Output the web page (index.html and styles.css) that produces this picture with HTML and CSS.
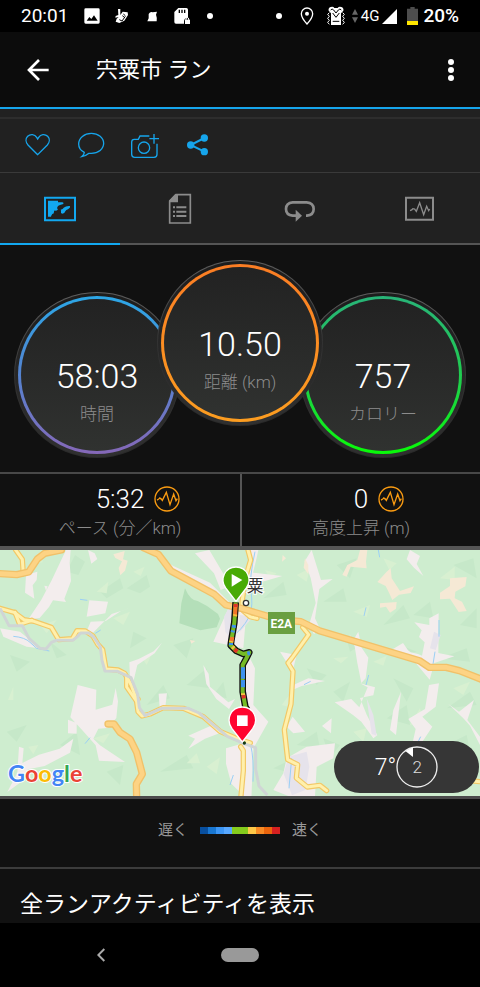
FILE: index.html
```html
<!DOCTYPE html>
<html lang="ja">
<head>
<meta charset="utf-8">
<meta name="viewport" content="width=device-width, initial-scale=1">
<title>宍粟市 ラン</title>
<link rel="stylesheet" href="styles.css">
</head>
<body>
<div class="status">
  <div class="status-left">
    <time class="clock">20:01</time>
    <svg class="si" viewBox="0 0 48 48"><path fill="#fff" fill-rule="evenodd" d="M5 1h38q4 0 4 4v38q0 4-4 4H5q-4 0-4-4V5q0-4 4-4zM8 38h33L30 22l-8 11-6-6z"/></svg>
    <svg class="si" viewBox="0 0 48 48"><path fill="#fff" d="M12 3h7v18l7-10 15 2 1 8-11 17-15 7-11-4 3-9 6-5-10 2 1-5 8-3z"/><path fill="none" stroke="#000" stroke-width="3" d="M28 18l6 5M25 23l6 5M16 35l8 4 10-14"/></svg>
    <svg class="si" viewBox="0 0 48 48"><path fill="#fff" d="M14 18q5-8 12-5l13-2-3 9q4 10 2 20H10l4-9z"/></svg>
    <svg class="si" viewBox="0 0 48 48"><path fill="#fff" d="M13 0h24q5 0 5 5v24q-12 0-12 12v6H6q-5 0-5-5V12z"/><path stroke="#000" stroke-width="4" d="M16 5v10M24 5v10M32 5v10"/><path fill="#fff" d="M33 35h15v13H33z"/><path fill="none" stroke="#fff" stroke-width="3" d="M36 36v-3q0-4 4-4t4 4v3"/></svg>
    <i class="dot"></i>
  </div>
  <div class="status-right">
    <i class="dot"></i>
    <svg class="pin-icon" viewBox="0 0 42 54"><path fill="none" stroke="#fff" stroke-width="4" d="M21 51Q4 32 4 20a17 17 0 0 1 34 0q0 12-17 31z"/><circle cx="21" cy="20" r="6" fill="#fff"/></svg>
    <svg class="buzz-icon" viewBox="0 0 60 60"><path fill="#fff" d="M15 22L8 14q-2-8 6-11 8-3 11 3h10q4-6 11-3 8 3 6 11l-7 8v35H15z"/><g fill="none" stroke="#000" stroke-width="3"><path d="M14 12q4-6 9 0l7 9 7-9q5-6 9 0M20 21l10 13 10-13"/><path d="M20 46h20"/></g><path fill="none" stroke="#fff" stroke-width="3" d="M10 20l-5 5 5 6-5 6 5 6-5 6 5 6M50 20l5 5-5 6 5 6-5 6 5 6-5 6"/></svg>
    <svg class="data-icon" viewBox="0 0 18 42"><path fill="#666" d="M9 0l9 17H0zM9 42L0 25h18z"/></svg>
    <span class="net">4G</span>
    <svg class="signal-icon" viewBox="0 0 45 45"><path fill="#fff" d="M45 0v45H0z"/></svg>
    <svg class="battery-icon" viewBox="0 0 33 54"><path fill="#4d4d4d" d="M10 0h13v5h10v37H0V5h10z"/><path fill="#ffe600" d="M0 42h33v12H0z"/></svg>
    <span class="percent">20%</span>
  </div>
</div>

<header class="appbar">
  <button class="icon-button" type="button" aria-label="戻る"><svg class="back-icon" viewBox="0 0 66 66"><path fill="none" stroke="#fff" stroke-width="8" d="M65 33H6M36 3L6 33l30 30"/></svg></button>
  <h1>宍粟市 ラン</h1>
  <button class="icon-button" type="button" aria-label="メニュー"><svg class="more-icon" viewBox="0 0 8 24"><g fill="#fff"><circle cx="4" cy="4" r="3"/><circle cx="4" cy="12" r="3"/><circle cx="4" cy="20" r="3"/></g></svg></button>
</header>

<div class="actions">
  <button type="button" aria-label="いいね"><svg viewBox="68 77 90 90"><path d="M112 151L83 122C76 114 75 103 82 96c8-8 21-7 27 3l3 5 3-5c6-10 19-11 27-3 7 7 6 18-1 26z"/></svg></button>
  <button type="button" aria-label="コメント"><svg viewBox="227 76 90 90"><path d="M252 143c-11-5-17-14-17-25 0-18 17-32 38-32s37 13 37 30-16 30-37 30h-7c-6 5-14 9-22 10 5-4 8-8 8-13z"/></svg></button>
  <button type="button" aria-label="写真を追加"><svg viewBox="386 76 90 90"><path d="M447 94h-28l-5 10h-12q-8 0-8 8v37q0 9 9 9h58q9 0 9-9v-32M461 88v29M447 102h29"/><circle cx="431" cy="129" r="17"/></svg></button>
  <button type="button" aria-label="共有"><svg viewBox="545 76 90 90"><path stroke-width="6" d="M612 100l-41 21 41 20"/><g fill="#16a5ec" stroke="none"><circle cx="612" cy="100" r="11"/><circle cx="571" cy="121" r="11"/><circle cx="612" cy="141" r="11"/></g></svg></button>
</div>

<nav class="tabs">
  <button class="active" type="button" aria-label="マップ"><svg viewBox="126 256 108 108"><path fill="none" stroke="currentColor" stroke-width="6" d="M135 279h90v68h-90z"/><path fill="currentColor" d="M144 288h30v5h13q5 1 3 5l-10 3q-6 2-8 6-2 5 2 7-3 5-7 4-6-1-5 4 0 6-5 6-3 3-4 8h-9zM210 304q2 6-6 10-6 1-8 6-2 7-9 7-6-1-4-6 1-3-1-6 7-1 9-6 7-6 19-5z"/></svg></button>
  <button type="button" aria-label="詳細"><svg viewBox="486 256 108 108"><path fill="none" stroke="currentColor" stroke-width="5" d="M528 270h43v85h-62v-66z"/><path fill="currentColor" d="M526 268h8v25h-26v-6z"/><path stroke="currentColor" stroke-width="6" d="M519 308h6m4 0h30M519 321h6m4 0h30M519 334h6m4 0h30"/></svg></button>
  <button type="button" aria-label="ラップ"><svg viewBox="126 256 108 108"><path fill="none" stroke="currentColor" stroke-width="8" d="M168 333h-10q-20-2-20-20t20-20h42q21 2 21 20t-20 20h-3"/><path fill="currentColor" d="M167 315l19 18-19 18z"/></svg></button>
  <button type="button" aria-label="グラフ"><svg viewBox="486 256 108 108"><path fill="none" stroke="currentColor" stroke-width="6" d="M498 279h81v66h-81z"/><path fill="none" stroke="currentColor" stroke-width="4" d="M510 318q6-1 9-6l5 1 5 7 10-26 12 36 9-25 6 13 3-5"/></svg></button>
</nav>

<main>
<section class="gauges">
  <div class="gauge time"><div class="ring"><strong>58:03</strong><span>時間</span></div></div>
  <div class="gauge distance"><div class="ring"><strong>10.50</strong><span>距離 (km)</span></div></div>
  <div class="gauge calories"><div class="ring"><strong>757</strong><span>カロリー</span></div></div>
</section>

<section class="stats">
  <div class="stat">
    <strong>5:32</strong>
    <svg viewBox="0 0 78 78"><circle cx="39" cy="39" r="36"/><path d="M9 42q6-2 8-6 4 1 8 7l12-24 11 37 11-32 7 20 4-6"/></svg>
    <span>ペース (分／km)</span>
  </div>
  <div class="stat">
    <strong>0</strong>
    <svg viewBox="0 0 78 78"><circle cx="39" cy="39" r="36"/><path d="M9 42q6-2 8-6 4 1 8 7l12-24 11 37 11-32 7 20 4-6"/></svg>
    <span>高度上昇 (m)</span>
  </div>
</section>

<section class="map">
  <svg class="map-art" viewBox="0 15 1440 738" role="img" aria-label="ルートマップ">
    <path fill="#ceedcf" d="M0 0h1440v768H0z"/>
    <!-- hill shading -->
    <g fill="#c6e8c9">
      <path d="M200 80l25-50 30 20-20 40zM300 140l60-40 10 30-50 30zM380 130l60-40 10 35-30 20zM30 330l60 20-40 30zM150 290l50 40-30 10zM20 560l60-20-30 50zM180 600l50-40 10 70zM400 260l40 20-50 30zM520 300l60-20-20 60zM440 480l50-60 20 40zM560 420l60-50 10 60zM480 680l80-50 20 40zM320 680l50-20-10 60zM640 450l30-40 10 50zM790 160l60-50 10 40zM970 170l60-40 10 40zM1010 60l60-20-20 60zM1150 240l60-60 20 40zM1240 210l50-40 10 50zM1040 280l60 10-50 30zM1200 300l50 20-60 10zM1360 60l60-20 10 60zM1380 240l50-50v60zM1320 340l80-30 10 40zM920 370l60 20-30 30zM1000 440l50-30-20 60zM890 600l60-40 10 50zM970 580l50 20-30 40zM1160 520l60-40 10 60zM1340 490l70-50 20 40zM1340 600l60-30 10 50zM820 670l60-30 20 50zM1180 400l60 30-20 40z"/>
      <path fill="#b4dfb9" d="M555 130q16 38 38 38l28 15 33 24 6 14-10 26-49 9-63-21 6-60z"/>
    </g>
    <g fill="#d8f0d1">
      <path d="M88 60l35-42 5 34zM120 240l50-15-30 40zM290 140l35-30-5 35zM340 220l50-20-20 40zM24 465l16-40v40zM430 345l24-15-14 30zM85 605l30-5-15 28zM560 655l30-30 10 30zM620 665l40-28-10 50zM280 580l50-15-20 30zM400 80l34-15-12 28zM795 75l35 10-20 14zM890 90l40-20-10 40zM1060 200l50-20-10 36zM1320 100l44-35v40zM1150 40l40 15-22 20zM1000 340l45-5-22 20zM1120 350l40-18-10 30zM1230 540l30-50 10 40zM1360 430l50-20-20 40zM915 660l60-35-20 40zM845 480l30-40 5 50zM1060 560l40-10-10 40z"/>
    </g>
    <!-- settlements -->
    <g fill="#f3eded">
      <path d="M198 15h14l-3 38 4 55-20 53 5 10-39-5-12 20-28 33-35 5 40-60 31-58zM264 15l20 10 8 17-18 14zM78 90l34-10-2 25-12 16 5 40-28-18zM133 122l10 2-5 13zM268 166l56 4-8 35-56 10zM420 179l-85 28-56 56-17-9 10-24 45-2 46-30zM486 293l-22 32-52 35-12 50 12 36-22-44-2-50 28-10 45-23zM233 420l56 14-2 60 50-15 10-50 7 40-5 50-26 30-28 2-15 30 20 20 75 50-78-4-10-46-40-45-36-39zM204 524l26 10v32l-26-1zM476 446l25-1-5 40-17 4zM585 25l43-10 64 108-30 12-20-50zM440 15l80 48 110 50 60 60-20 0-140-85zM690 180l50 10-10 120-90-20zM610 360l16 27 4 38 55 47 20-10-18 30-38-30-30-45zM565 572l73-32 20 25-43 16-50 30 20-30zM678 610l52-15v155l-16-14-20-20-16-60zM57 605l14 5-4 44 50-25 62-18 41-30-10 42-76 40-50 10-24 40-38 28 30-58zM0 250l60 10 60 50-40-5-70-30z"/>
      <path d="M745 15h30l-6 28-10 40 88 10-70 20-35 22zM935 15l28 90 35-3-40 30-13 88 14 30-17 18-15-28 20-66-15-75-18-50zM1230 15l30 18-10 24 20 36-28-25-22-25zM1316 205l-28 15v20l-45-8 22 24-8 20 17 16-8 40-12-5-22-5-8-6-15-22-50 30 80 20 50 60 14-50 60-20-48-10zM1075 260l-15 25-12-17 16 36 8 50 12 60 13-14 8-62-20-30zM720 350l25-20 20 40-5 110 45 50-45 80-7 180-32-50zM840 320l50 10-10 40-15-10zM880 420l45-20 50 8-70 15-35 15zM1080 415l45 12-5 24-40 8 20 50 32 62-12 9-36-50-25-20-55-38 50-10 24 25 25-60zM1287 420l30-5-10 70-40 30 30 30-30 45-12 10-18-3 10-45-22-30 50-30zM1203 440l-15 130-18-15 10-60zM995 520l-2 45-27-22zM878 515l37 45-35 5-20-20zM860 640l60-35 85-10-5 45-50 25-5 90h-75l-50-20 30-50zM1440 600l-30-58-20-22-45-43 32 23 45-35-20 60 38 50z"/>
    </g>
    <g fill="#e6e3eb">
      <path d="M672 215l16-30 26 15-5 60-18 20-15-20zM865 635l55-15 8 45-12 70-40 16-25-65zM1290 310l12-50 20 10-15 45zM1100 460l20 50 10 62-15-5zM720 210l40 5-40 45z"/>
    </g>
    <g fill="#f5e9d5">
      <path d="M340 28l34-10-5 25 14 4-8 30-14 14-5-22 10-20-20-10zM1080 15h22l-4 35 2 20-48-5-12 30-13-5 15-30 30-15zM1160 80l12-10 3 30 25 38 42-14-10 20-35 5-20 16-10-22-10-20-25-12zM1140 175l50-4-2 20-18 12-12-18-18 3zM1350 100l50-4-4 28-30 16-2 20 22 10 14 28-24 3-26-40-30 2 0-20 30-20zM848 30l-2 20 12-10zM915 40l10 20 0 28-14-20zM570 285l16 3-12 8z"/>
    </g>
    <g fill="none" stroke="#9bd0f5" stroke-width="3">
      <path d="M240 163l22 3M40 274q35 3 50 18l20 18 38 8M286 265l16-10M270 578l-15 18M765 20q-18 80-12 120t-2 65q-10 30-42 60M1092 213l6-26M1317 225v50M1305 320l-8 50M1262 575l-20 40M1106 390l-8 30M912 419l20-10M700 690l-10 30M752 600q10 40 7 110M875 640l-8 90M1135 15l4 22"/>
    </g>
    <!-- local roads -->
    <g class="road-edge">
      <path d="M0 190l42 12 30 22 30 5 52 18 22 37 41-3 14-24 25 1 22 14 16 27 14 15 10 58 36 3 20 10 20 36 15 42 5 37 12 13 24-6 40-19 60 2 60 25 50 44 46 20 45 15"/>
      <path d="M47 15l20 28 2 30-3 15"/>
      <path d="M380 396v30l28 40 6-4M45 202l14 36 36-12"/>
      <path d="M744 15l8 30-15 50 -10 70 -2 28 25 22 21 5M908 247l18 22-50 70-12 15 15 25-6 98-20 77 10 90 30 15-4 40 33 27 38-5 20 16M722 605l8 12v60l-7 76M1390 705l50 5"/>
    </g>
    <g class="road-fill">
      <path d="M0 190l42 12 30 22 30 5 52 18 22 37 41-3 14-24 25 1 22 14 16 27 14 15 10 58 36 3 20 10 20 36 15 42 5 37 12 13 24-6 40-19 60 2 60 25 50 44 46 20 45 15"/>
      <path d="M47 15l20 28 2 30-3 15"/>
      <path d="M380 396v30l28 40 6-4M45 202l14 36 36-12"/>
      <path d="M744 15l8 30-15 50 -10 70 -2 28 25 22 21 5M908 247l18 22-50 70-12 15 15 25-6 98-20 77 10 90 30 15-4 40 33 27 38-5 20 16M722 605l8 12v60l-7 76M1390 705l50 5"/>
    </g>
    <!-- river -->
    <path class="rail" d="M0 190l27 52h40l20 38 33 30 18 2 16-20 15-6h49l15-12 9-10h25l14 12 20 30 5 40 9 32 38 1 40 19 20 50 5 40 17 24 50-22h80l32 14 85 70 50 22 35 12v65l10 50 25 27"/>
    <!-- expressways -->
    <g class="highway-edge"><path d="M0 86l50 3 36-8 26-39 22-17 50-10M430 8l45 20 38 50 130 70 35 32 45 10 110 33 70 7 55 27 300 90 30 20h50l40 10 82 32"/><path d="M324 537l18 0 18 25 30 20 20 40 17 65-18 30 1 40"/></g>
    <g class="highway-fill"><path d="M0 86l50 3 36-8 26-39 22-17 50-10M430 8l45 20 38 50 130 70 35 32 45 10 110 33 70 7 55 27 300 90 30 20h50l40 10 82 32"/><path d="M324 537l18 0 18 25 30 20 20 40 17 65-18 30 1 40"/></g>
    <!-- labels -->
    <text class="town" x="740" y="140">粟</text>
    <circle cx="738" cy="174" r="8" fill="#fff" stroke="#333" stroke-width="4"/>
    <path fill="#6a9f41" d="M804 201h81v66h-81z"/>
    <text class="shield" x="844" y="249">E2A</text>
    <!-- track -->
    <g fill="none">
      <path stroke="#111" stroke-width="20" d="M707 172l-4 60-9 54-2 15 16 16 22 10 18-5-10 20-10 18v80l8 45 6 10"/>
      <path stroke="#75ba25" stroke-width="12" d="M707 172l-4 60-9 54-2 15 16 16 22 10 18-5-10 20-10 18v80l8 45 6 10"/>
      <path stroke="#f4742b" stroke-width="12" d="M707 178l-2 36M697 276l-3 16"/>
      <path stroke="#3d91ed" stroke-width="12" d="M702 240l-1 8M699 256l-1 6M693 294v6M729 367v34M729 405v22M742 326l8-2"/>
      <path stroke="#df3528" stroke-width="12" d="M707 176v10M703 313l9 7M730 450l2 10"/>
      <path stroke="#f3c441" stroke-width="12" d="M706 208l-1 5M694 288l-1 4M697 305l5 5M729 445v5"/>
    </g>
    <path fill="#48aa05" stroke="#fff" stroke-width="4" d="M708 169l-31-40c-19-27-2-63 31-63s50 36 31 63z"/>
    <path fill="#fff" d="M695 87l32 18-32 20z"/>
    <circle cx="733" cy="594" r="5" fill="#143b14"/>
    <path fill="#ff052f" stroke="#fff" stroke-width="4" d="M727 591l-31-40c-20-28-3-65 31-65s51 37 31 65z"/>
    <path fill="#fff" d="M711 511h32v32h-32z"/>
    <text class="brand" x="24" y="710"><tspan fill="#4285f4">G</tspan><tspan fill="#ea4335">o</tspan><tspan fill="#fbbc05">o</tspan><tspan fill="#4285f4">g</tspan><tspan fill="#34a853">l</tspan><tspan fill="#ea4335">e</tspan></text>
  </svg>
  <div class="weather">
    <span class="temp">7°</span>
    <span class="wind"><svg viewBox="0 0 126 126"><circle cx="63" cy="63" r="60" fill="none" stroke="#eee" stroke-width="4"/><path fill="#fff" d="M28 15l23-11v29z"/></svg><b>2</b></span>
  </div>
</section>

<section class="legend">
  <span>遅く</span>
  <svg viewBox="0 0 10 1" preserveAspectRatio="none" shape-rendering="crispEdges"><path fill="#084f9f" d="M0 0h1v1H0z"/><path fill="#1977d2" d="M1 0h1v1H1z"/><path fill="#3c96f5" d="M2 0h1v1H2z"/><path fill="#58a8ff" d="M3 0h1v1H3z"/><path fill="#84cb1d" d="M4 0h2v1H4z"/><path fill="#fdc848" d="M6 0h1v1H6z"/><path fill="#f88b25" d="M7 0h1v1H7z"/><path fill="#eb650d" d="M8 0h1v1H8z"/><path fill="#d62020" d="M9 0h1v1H9z"/></svg>
  <span>速く</span>
</section>

<a class="all-link" href="#">全ランアクティビティを表示</a>
</main>

<footer class="sysnav">
  <button type="button" aria-label="戻る"><svg viewBox="0 0 24 42"><path fill="none" stroke="#aaa" stroke-width="6" d="M22 3L4 21l18 18"/></svg></button>
  <button class="home" type="button" aria-label="ホーム"></button>
</footer>
</body>
</html>
```
FILE: styles.css
```css
* { box-sizing: border-box; }

body {
  margin: 0;
  min-height: 100vh;
  display: flex;
  flex-direction: column;
  background: #000;
  color: #fff;
  font-family: Roboto, "Noto Sans CJK JP", sans-serif;
}

button {
  margin: 0;
  padding: 0;
  border: 0;
  background: none;
  color: inherit;
  font: inherit;
}

svg { display: block; }

main {
  flex: 1;
  display: flex;
  flex-direction: column;
  background: #111;
}

/* Status bar */
.status {
  height: 32px;
  display: flex;
  justify-content: space-between;
  align-items: center;
  padding: 0 21px;
  font-size: 19px;
  line-height: 32px;
}

.status-left, .status-right { display: flex; align-items: center; }
.status-left { gap: 14px; }
.clock { margin-right: 2px; }
.si { width: 16px; height: 16px; }
.dot { width: 6px; height: 6px; border-radius: 50%; background: #fff; }
.status-left .dot { margin-left: 3px; }
.pin-icon { width: 14px; height: 18px; margin-left: 18px; }
.buzz-icon { width: 20px; height: 20px; margin-left: 12px; }
.data-icon { width: 6px; height: 14px; margin: 0 3px 0 6px; }
.net { font-size: 15px; }
.signal-icon { width: 15px; height: 15px; margin-left: 3px; }
.battery-icon { width: 11px; height: 18px; margin: 0 5px 0 10px; }
.percent { font-weight: 500; }

/* Title bar */
.appbar {
  height: 77px;
  display: flex;
  align-items: center;
  background: #0c0c0c;
  border-bottom: 2px solid #16a5ec;
}

.icon-button {
  height: 48px;
  display: grid;
  place-items: center;
  width: 59px;
}

.icon-button:first-child { width: 75px; }
.back-icon { width: 22px; height: 22px; }
.more-icon { width: 8px; height: 24px; }

h1 {
  flex: 1;
  margin: 0 0 0 21px;
  font-size: 22px;
  line-height: 32px;
  font-weight: 400;
}

/* Social actions */
.actions {
  display: flex;
  padding: 0 11px;
  background: #212121;
  border-top: 8px solid #212121;
  border-bottom: 1px solid #3a3a3a;
  box-shadow: inset 0 2px #2d2d2d;
}

.actions button {
  width: 53px;
  height: 55px;
  display: grid;
  place-items: center;
}

.actions svg {
  width: 30px;
  height: 30px;
  fill: none;
  stroke: #16a5ec;
  stroke-width: 4;
}

/* Tabs */
.tabs {
  display: grid;
  grid-template-columns: repeat(4, 1fr);
  background: #212121;
}

.tabs button {
  height: 72px;
  display: grid;
  place-items: center;
  color: #8c8c8c;
  border-bottom: 2px solid #555;
}

.tabs .active { color: #12a8f0; border-color: #12a8f0; }
.tabs svg { width: 36px; height: 36px; }

/* Gauges */
.gauges {
  display: flex;
  justify-content: center;
  align-items: flex-end;
  padding: 15px 0 14px;
}

.gauge {
  flex: none;
  width: 166px;
  height: 166px;
  padding: 3px;
  border: 1px solid transparent;
  border-radius: 50%;
  background: linear-gradient(#1d1d1d, #303030) padding-box, linear-gradient(#606060, #333 50%, #292929) border-box;
}

.gauge + .gauge { margin-left: -23px; }
.distance { position: relative; margin-bottom: 32px; }

.ring {
  height: 100%;
  padding-top: 57px;
  border: 3px solid transparent;
  border-radius: 50%;
  display: flex;
  flex-direction: column;
  align-items: center;
  gap: 6px;
}

.time .ring { background: linear-gradient(#222, #303230) padding-box, linear-gradient(#2ca7e7, #5583d0 50%, #8568b8) border-box; }
.distance .ring { background: linear-gradient(#222, #303230) padding-box, linear-gradient(#fb7d24, #fc9d20) border-box; }
.calories .ring { background: linear-gradient(#222, #303230) padding-box, linear-gradient(#28b478, #20cc50 50%, #08fa08) border-box; }

.ring strong { font-size: 34px; line-height: 40px; font-weight: 300; }

.ring span, .stat span {
  color: #8c8c8c;
  font-size: 17px;
  line-height: 24px;
  font-weight: 300;
}

/* Stats */
.stats {
  display: grid;
  grid-template-columns: 1fr 1fr;
  border-top: 2px solid #484848;
  border-bottom: 4px solid #555;
}

.stat {
  display: grid;
  grid-template-columns: 1fr auto 1fr;
  align-items: center;
  column-gap: 10px;
  row-gap: 1px;
  padding: 9px 0 6px;
}

.stat + .stat { border-left: 2px solid #555; }
.stat strong { grid-column: 2; font-size: 26px; line-height: 32px; font-weight: 300; }
.stat svg { width: 26px; height: 26px; fill: none; stroke: #f99b12; stroke-width: 4; }
.stat span { grid-column: 1 / -1; text-align: center; }

/* Map */
.map { position: relative; border-bottom: 3px solid #4b4b4b; }
.map-art { width: 100%; height: auto; }
.map-art path { stroke-linejoin: round; }
.rail { fill: none; stroke: #d0d5d5; stroke-width: 9; }
.road-edge, .road-fill, .highway-edge, .highway-fill { fill: none; stroke-linecap: round; }
.road-edge { stroke: #f2c866; stroke-width: 16; }
.road-fill { stroke: #fff0ac; stroke-width: 9; }
.highway-edge { stroke: #f1c169; stroke-width: 22; }
.highway-fill { stroke: #fdd384; stroke-width: 14; }
.town { fill: #333; stroke: #fff; stroke-width: 6; paint-order: stroke; font-size: 50px; font-family: "Noto Sans CJK JP", sans-serif; }
.shield { fill: #fff; font-size: 36px; font-weight: 700; text-anchor: middle; }
.brand { font-family: Lato, sans-serif; font-size: 70px; font-weight: 700; stroke: #fff; stroke-width: 6; paint-order: stroke; }

.weather {
  position: absolute;
  right: 1px;
  bottom: 3px;
  width: 145px;
  height: 52px;
  display: flex;
  align-items: center;
  justify-content: center;
  border-radius: 26px;
  background: #363636;
}

.temp { font-size: 23px; font-weight: 300; }
.wind { display: grid; place-items: center; }
.wind svg, .wind b { grid-area: 1 / 1; }
.wind svg { width: 42px; height: 42px; }
.wind b { font-size: 17px; font-weight: 300; color: #ddd; }

/* Pace legend */
.legend {
  display: flex;
  justify-content: center;
  align-items: center;
  gap: 12px;
  padding: 19px 0 25px;
  border-bottom: 2px solid #3c3c3c;
  color: #999;
  font-size: 15px;
  line-height: 24px;
}

.legend svg { width: 80px; height: 7px; }

.all-link {
  flex: 1;
  padding: 24px 20px 5px;
  color: #fff;
  font-size: 23px;
  line-height: 24px;
  text-decoration: none;
}

/* System navigation */
.sysnav {
  height: 64px;
  display: grid;
  grid-template-columns: 1fr auto 1fr;
  column-gap: 20px;
  align-items: center;
}

.sysnav button:first-child { justify-self: center; width: 48px; height: 48px; display: grid; place-items: center; }
.sysnav svg { width: 8px; height: 14px; }
.sysnav .home { width: 38px; height: 14px; border-radius: 7px; background: #999; }
```
